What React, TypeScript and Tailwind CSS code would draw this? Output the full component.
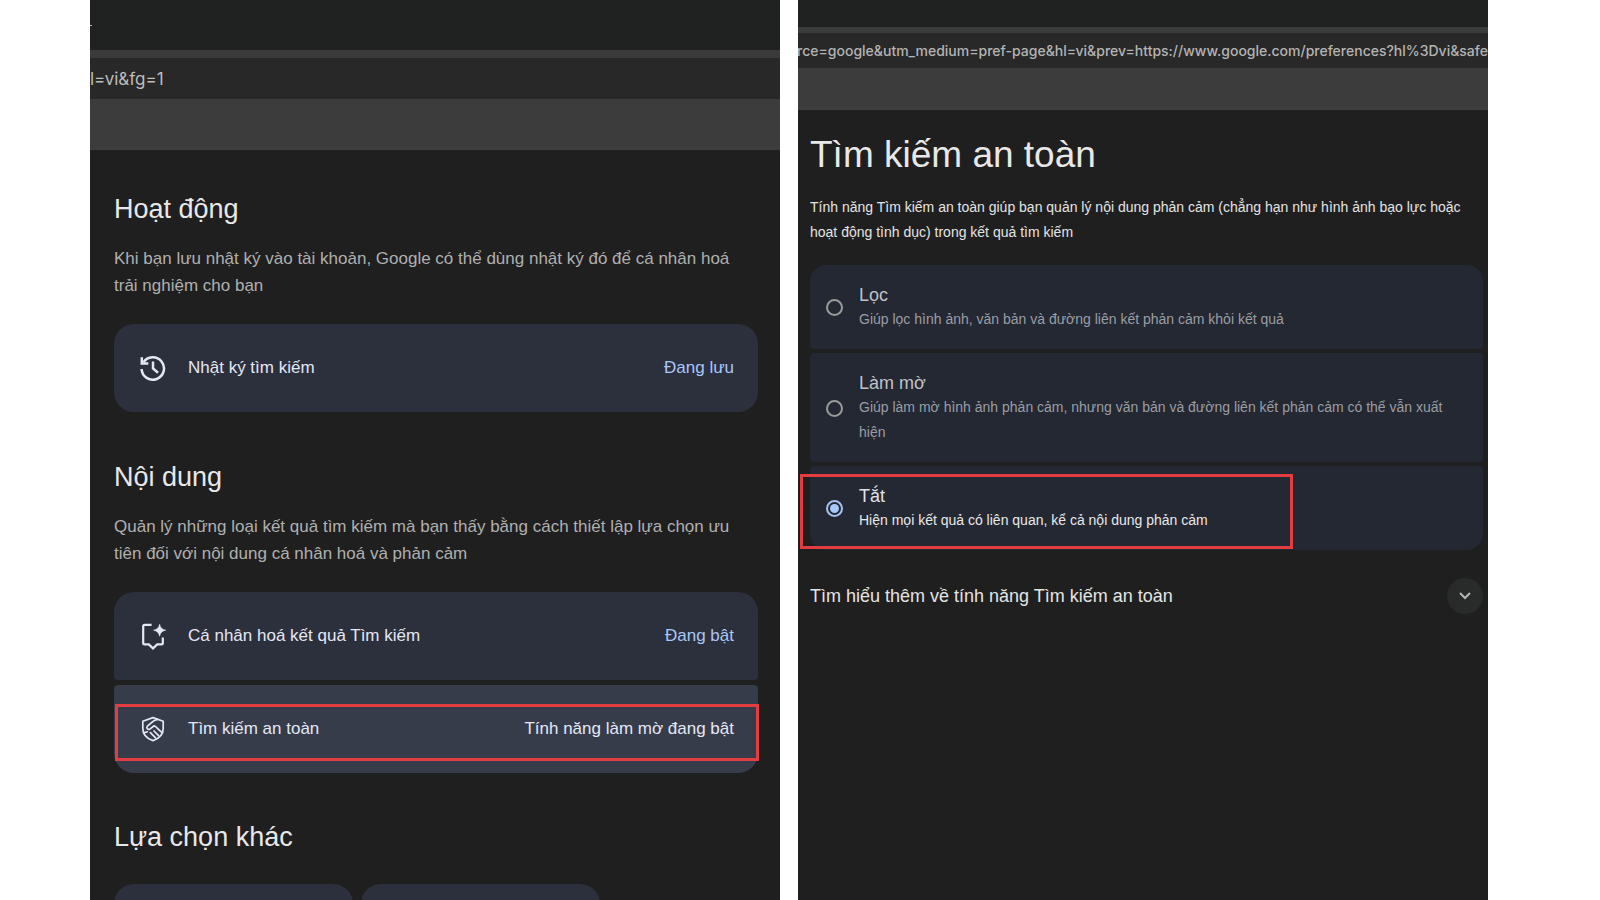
import { useState } from "react";
import type { ReactNode } from "react";

/* --------- types --------- */

type Level = "filter" | "blur" | "off";

type Option = {
  id: Level;
  label: string;
  description: string;
};

/* --------- data --------- */

const OPTIONS: Option[] = [
  {
    id: "filter",
    label: "Lọc",
    description: "Giúp lọc hình ảnh, văn bản và đường liên kết phản cảm khỏi kết quả",
  },
  {
    id: "blur",
    label: "Làm mờ",
    description:
      "Giúp làm mờ hình ảnh phản cảm, nhưng văn bản và đường liên kết phản cảm có thể vẫn xuất hiện",
  },
  {
    id: "off",
    label: "Tắt",
    description: "Hiện mọi kết quả có liên quan, kể cả nội dung phản cảm",
  },
];

/* --------- icons --------- */

function HistoryIcon() {
  return (
    <svg viewBox="0 0 28 28" className="size-7" fill="none" stroke="currentColor" strokeWidth="2.5">
      <path d="M2.6 15A11.2 11.2 0 1 0 4.4 8.4" />
      <path d="M2.8 3.2v6.3h6.5" />
      <path d="M14 7.4v7l5 4.4" />
    </svg>
  );
}

function PersonalizeIcon() {
  return (
    <svg viewBox="0 0 28 28" className="size-7" fill="none" stroke="currentColor" strokeWidth="2.2">
      <path d="M12.6 2.9H5.6a1.4 1.4 0 0 0-1.4 1.4V21a1.4 1.4 0 0 0 1.4 1.4h4.2l4.2 4 4.2-4h4.2a1.4 1.4 0 0 0 1.4-1.4v-5.4" />
      <path
        d="M20.6 2.2q.9 5.1 6 6-5.1.9-6 6-.9-5.1-6-6 5.1-.9 6-6z"
        fill="currentColor"
        strokeWidth="0.6"
      />
    </svg>
  );
}

function SafeIcon() {
  return (
    <svg
      viewBox="0 0 28 28"
      className="size-7"
      fill="none"
      stroke="currentColor"
      strokeWidth="1.7"
      strokeLinejoin="round"
      strokeLinecap="round"
    >
      <path d="M14 2.6l10.2 3.6v7.2c0 5.8-4.1 10.1-10.2 12.2-6.1-2.1-10.2-6.4-10.2-12.2V6.2z" />
      <path d="M18.6 4.4c-3 .6-4.6 1.8-6.4 3.4l-3.8 3.4a1.9 1.9 0 0 0 2.4 2.9l4.4-3.3c3 1.3 4.9 5 8.2 6.700" />
      <path d="M15 16l4.600 4.600M11.400 17.600l5.200 5.200M5.400 17.600l3-.8" />
    </svg>
  );
}

/* --------- parts --------- */

function SettingsRow({
  icon,
  label,
  value,
  className,
}: {
  icon: ReactNode;
  label: string;
  value: string;
  className: string;
}) {
  return (
    <a
      href="#"
      className={`flex h-[88px] items-center pr-6 pl-[25px] text-[17px] text-[#e4e7f5] ${className}`}
    >
      {icon}
      <span className="ml-[21px] flex-1">{label}</span>
      <span>{value}</span>
    </a>
  );
}

function SectionHead({ title, children }: { title: string; children: ReactNode }) {
  return (
    <>
      <h2 className="text-[27px] leading-8 text-[#e8e8e8]">{title}</h2>
      <p className="mt-5 mb-[25px] pr-5 text-[17px] leading-[27px] text-[#b0b0b0]">{children}</p>
    </>
  );
}

/* --------- left window --------- */

function SearchSettings() {
  return (
    <section className="overflow-hidden bg-[#1f1f1f]">
      <div className="flex h-[50px] items-center bg-[#202222]">
        <span className="h-px w-[2px] bg-[#b0b0b0]" />
      </div>
      <div className="h-2 bg-[#3a3a3a]" />
      <input
        type="text"
        readOnly
        aria-label="URL"
        defaultValue="l=vi&fg=1"
        className="block h-[41px] w-full bg-[#282828] font-['Inter'] text-[17px] text-[#bdbdbd] outline-none"
      />
      <div className="h-[51px] bg-[#3c3c3c]" />

      <div className="pt-[43px] pr-[22px] pl-6">
        <SectionHead title="Hoạt động">
          Khi bạn lưu nhật ký vào tài khoản, Google có thể dùng nhật ký đó để cá nhân hoá trải
          nghiệm cho bạn
        </SectionHead>
        <SettingsRow
          icon={<HistoryIcon />}
          label="Nhật ký tìm kiếm"
          value="Đang lưu"
          className="mb-[49px] rounded-[20px] bg-[#2c2f3c] [&>span:last-child]:text-[#a8c7fa]"
        />

        <SectionHead title="Nội dung">
          Quản lý những loại kết quả tìm kiếm mà bạn thấy bằng cách thiết lập lựa chọn ưu tiên đối
          với nội dung cá nhân hoá và phản cảm
        </SectionHead>
        <SettingsRow
          icon={<PersonalizeIcon />}
          label="Cá nhân hoá kết quả Tìm kiếm"
          value="Đang bật"
          className="rounded-t-[20px] rounded-b bg-[#2c2f3c] [&>span:last-child]:text-[#a8c7fa]"
        />
        <div className="relative mt-[5px]">
          <SettingsRow
            icon={<SafeIcon />}
            label="Tìm kiếm an toàn"
            value="Tính năng làm mờ đang bật"
            className="rounded-t rounded-b-[20px] bg-[#373c4b]"
          />
          <div className="pointer-events-none absolute top-[19px] -right-px bottom-3 left-px border-[3px] border-[#e43d41]" />
        </div>

        <h2 className="mt-12 text-[27px] leading-8 text-[#e8e8e8]">Lựa chọn khác</h2>
        <div className="mt-[31px] flex gap-2">
          <a href="#" aria-label="Lựa chọn 1" className="h-[88px] w-[239px] rounded-[20px] bg-[#2c2f3c]" />
          <a href="#" aria-label="Lựa chọn 2" className="h-[88px] w-[239px] rounded-[20px] bg-[#2c2f3c]" />
        </div>
      </div>
    </section>
  );
}

/* --------- right window --------- */

function SafeSearch() {
  const [level, setLevel] = useState<Level>("off");

  return (
    <section className="overflow-hidden bg-[#1f1f1f]">
      <div className="h-[27px] bg-[#202222]" />
      <div className="h-1.5 bg-[#3a3c3b]" />
      <input
        type="text"
        readOnly
        aria-label="URL"
        defaultValue="rce=google&utm_medium=pref-page&hl=vi&prev=https://www.google.com/preferences?hl%3Dvi&safe="
        className="block h-[35px] w-full bg-[#282828] -indent-px font-['Inter'] text-[14px] font-medium text-[#b4b4b4] outline-none"
      />
      <div className="h-[42px] bg-[#3c3c3c]" />

      <div className="pt-[23px] pr-[5px] pl-3">
        <h1 className="text-[37px] leading-[44px] text-[#e8e8e8]">Tìm kiếm an toàn</h1>
        <p className="mt-[18px] text-[14px] leading-[25px] text-[#e4e4e4]">
          Tính năng Tìm kiếm an toàn giúp bạn quản lý nội dung phản cảm (chẳng hạn như hình ảnh bạo
          lực hoặc hoạt động tình dục) trong kết quả tìm kiếm
        </p>

        <div className="relative mt-5 flex flex-col gap-1 [&>label:first-child]:rounded-t-[16px] [&>label:nth-child(3)]:rounded-b-[16px]">
          {OPTIONS.map((o) => (
            <label
              key={o.id}
              className="flex items-center rounded bg-[#242833] pt-[18px] pr-6 pb-[17px] pl-4"
            >
              <input
                type="radio"
                name="level"
                checked={level === o.id}
                onChange={() => setLevel(o.id)}
                className="peer size-[17px] shrink-0 appearance-none rounded-full border-2 border-[#9a9a9a] checked:border-[#a8c0f0] checked:bg-[#a8c7fa] checked:bg-clip-content checked:p-[2px]"
              />
              <span className="ml-4 text-[#9a9da3] peer-checked:text-[#e8e8e8]">
                <span
                  className={
                    level === o.id
                      ? "block text-[18px] leading-6 text-[#e0e2e8]"
                      : "block text-[18px] leading-6 text-[#c0c2c8]"
                  }
                >
                  {o.label}
                </span>
                <span className="block text-[14px] leading-[25px]">{o.description}</span>
              </span>
            </label>
          ))}
          <div className="pointer-events-none absolute right-[190px] bottom-px -left-[10px] h-[75px] border-[3px] border-[#e43d41]" />
        </div>

        <button
          type="button"
          className="mt-7 flex w-full items-center justify-between text-left text-[18px] text-[#e4e4e4]"
        >
          Tìm hiểu thêm về tính năng Tìm kiếm an toàn
          <span className="grid size-9 place-items-center rounded-full bg-[#292b2b]">
            <svg viewBox="0 0 12 8" className="h-2 w-3" fill="none" stroke="#b4b4b4" strokeWidth="2">
              <path d="M1 1l5 5 5-5" />
            </svg>
          </span>
        </button>
      </div>
    </section>
  );
}

/* --------- component --------- */

export default function App() {
  return (
    <main className="grid h-screen grid-cols-2 gap-[18px] overflow-hidden bg-white pr-28 pl-[90px] font-['Liberation_Sans',Arial,sans-serif]">
      <SearchSettings />
      <SafeSearch />
    </main>
  );
}
